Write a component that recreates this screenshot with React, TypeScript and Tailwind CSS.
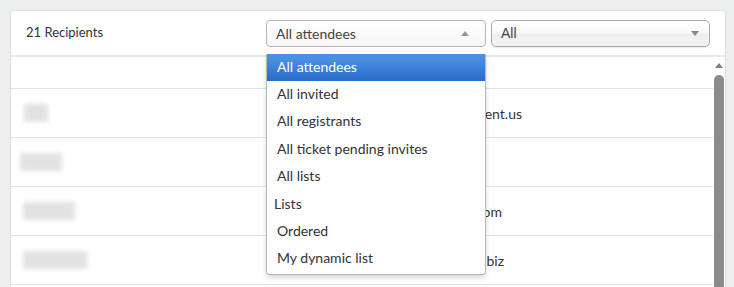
const options = [
  { label: "All attendees", active: true },
  { label: "All invited" },
  { label: "All registrants" },
  { label: "All ticket pending invites" },
  { label: "All lists" },
  { label: "Lists", group: true },
  { label: "Ordered" },
  { label: "My dynamic list" },
];

const rows = [
  { blur: "w-[24px]", email: "attendee@myevent.us", emailW: "w-[511px]" },
  { blur: "w-[42px] ml-[-4px]", email: "", emailW: "w-[511px]" },
  { blur: "w-[52px] ml-[-1px]", email: "guest@example.com", emailW: "w-[491px]" },
  { blur: "w-[64px] ml-[-1px]", email: "contact@company.biz", emailW: "w-[493px]" },
];

export default function App() {
  return (
    <div
      className="w-[734px] h-[287px] overflow-hidden bg-[#eceeef] pl-[10px] pt-[10px]"
      style={{ fontFamily: "Lato, 'Open Sans', sans-serif" }}
    >
      <div className="relative w-[716px] h-[290px] bg-white border border-[#dcdddd] rounded-t-[4px]">
        {/* header */}
        <div className="h-[46px] flex items-center border-b-2 border-[#e6e7e7] pl-[15px]">
          <div className="w-[240px] text-[13px] text-[#333]">21 Recipients</div>
          <div className="w-[220px] h-[27px] flex items-center justify-between pl-[9px] pr-[16px] border border-[#b5b5b5] rounded-[4px] bg-gradient-to-b from-white to-[#f7f7f7] text-[14px] text-[#444]">
            <span>All attendees</span>
            <span className="w-0 h-0 border-l-[4px] border-r-[4px] border-b-[5px] border-l-transparent border-r-transparent border-b-[#999]" />
          </div>
          <div
            className="ml-[5px] w-[219px] h-[27px] flex items-center justify-between pl-[9px] pr-[10px] border border-[#aaa] rounded-[5px] text-[14px] text-[#444] shadow-[0_1px_1px_rgba(0,0,0,0.08)]"
            style={{
              fontFamily: "'Liberation Sans', Arial, sans-serif",
              background: "linear-gradient(#fff 20%, #f6f6f6 50%, #eee 52%, #f4f4f4 100%)",
            }}
          >
            <span>All</span>
            <span className="w-0 h-0 border-l-[4px] border-r-[4px] border-t-[5px] border-l-transparent border-r-transparent border-t-[#888]" />
          </div>
        </div>

        {/* body */}
        <div className="flex">
          <div className="flex-1">
            <div className="h-[32px] border-b border-[#e2e2e2]" />
            {rows.map((r, i) => (
              <div key={i} className="h-[49px] flex items-center border-b border-[#e2e2e2] text-[14px] text-[#333]">
                <div className="w-[300px] pl-[13px]">
                  <div className={`${r.blur} h-[18px] bg-[#d9d9d9] blur-[2px] opacity-75`} />
                </div>
                <div className={`${r.emailW} -ml-[300px] text-right`}>{r.email}</div>
              </div>
            ))}
          </div>
          {/* scrollbar */}
          <div className="w-[12px] flex flex-col items-center pt-[6px] pr-[1px]">
            <span className="w-0 h-0 border-l-[4px] border-r-[4px] border-b-[5px] border-l-transparent border-r-transparent border-b-[#808080]" />
            <div className="mt-[7px] w-[10px] h-[230px] bg-[#8b8b8b] rounded-t-[5px]" />
          </div>
        </div>

        {/* dropdown */}
        <div className="absolute left-[255px] top-[43px] w-[220px] h-[221px] bg-white border border-[#b8b8b8] border-t-0 rounded-b-[4px] shadow-[0_3px_5px_rgba(0,0,0,0.15)] overflow-hidden">
          {options.map((o) => (
            <div
              key={o.label}
              className={`h-[27.4px] flex items-center pb-[3px] text-[14px] ${
                o.active ? "text-white pl-[10px]" : o.group ? "text-[#333] pl-[7px]" : "text-[#333] pl-[10px]"
              }`}
              style={o.active ? { background: "linear-gradient(#4a8fe2 20%, #2c6cc9 95%)" } : undefined}
            >
              {o.label}
            </div>
          ))}
        </div>
      </div>
    </div>
  );
}
